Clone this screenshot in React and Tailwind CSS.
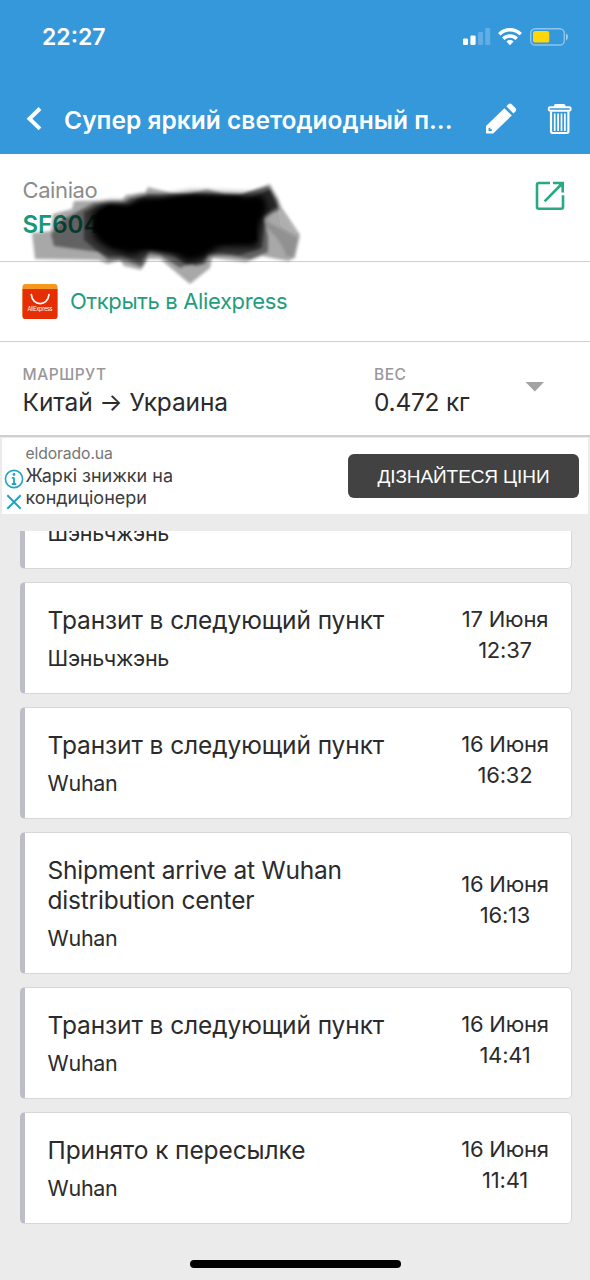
import React from "react";

const events = [
    {
        title: "Транзит в следующий пункт",
        place: "Шэньчжэнь",
        date: "17 Июня",
        time: "12:37",
    },
    {
        title: "Транзит в следующий пункт",
        place: "Wuhan",
        date: "16 Июня",
        time: "16:32",
    },
    {
        title: "Shipment arrive at Wuhan distribution center",
        latin: true,
        place: "Wuhan",
        date: "16 Июня",
        time: "16:13",
    },
    {
        title: "Транзит в следующий пункт",
        place: "Wuhan",
        date: "16 Июня",
        time: "14:41",
    },
    {
        title: "Принято к пересылке",
        place: "Wuhan",
        date: "16 Июня",
        time: "11:41",
    },
];

function StatusIcons() {
    return (
        <svg width="108" height="22" viewBox="461 26 108 22" fill="none">
            <rect x="463" y="38.5" width="5" height="6.5" rx="1.3" fill="#fff" />
            <rect x="470.4" y="35.5" width="5.2" height="9.5" rx="1.3" fill="#fff" />
            <rect x="478" y="32" width="5" height="13" rx="1.3" fill="#fff" opacity="0.22" />
            <rect x="485.2" y="28" width="5" height="17" rx="1.3" fill="#fff" opacity="0.22" />
            <g stroke="#fff" strokeWidth="3.5">
                <path d="M499.3 34.2a15.2 15.2 0 0 1 21.4 0" />
                <path d="M503.3 38.7a9.6 9.6 0 0 1 13.4 0" />
            </g>
            <path d="M510 45.2l-3.6-3.6a5.1 5.1 0 0 1 7.2 0z" fill="#fff" />
            <rect x="530.7" y="28.7" width="33.6" height="16.3" rx="4.6" stroke="#fff" strokeOpacity="0.45" strokeWidth="1.4" />
            <rect x="533" y="31" width="16.3" height="11.6" rx="2.2" fill="#ffd60a" />
            <path d="M566 33.6c2.6 1 2.6 5.8 0 6.8z" fill="#fff" fillOpacity="0.5" />
        </svg>
    );
}

function PencilIcon() {
    return (
        <svg width="32" height="32" viewBox="485 103 32 32" fill="#fff">
            <path
                fillRule="evenodd"
                d="M486 126L504.400 108.200L511.800 115.400L493.200 133.500H486.800Q486 133.500 486 132.700ZM488.600 128V131H491.700L492 129.200H490.300V127.400Z"
            />
            <path d="M506.300 106.300L508.500 104.300Q510.200 102.900 511.700 104.300L515.600 108.200Q516.900 109.700 515.600 111.200L513.500 113.500Z" />
        </svg>
    );
}

function TrashIcon() {
    return (
        <svg width="26" height="32" viewBox="547 102 26 32" fill="none" stroke="#fff">
            <path d="M554.700 106.500V104.600Q554.700 103.700 555.600 103.700H563.800Q564.700 103.700 564.700 104.600V106.500" fill="#fff" strokeWidth="1.500" />
            <rect x="548.700" y="106.300" width="22" height="3.400" rx="1.400" strokeWidth="1.900" />
            <path d="M551 110.500V130.300Q551 132 552.700 132H566.700Q568.400 132 568.400 130.300V110.500" strokeWidth="2.200" />
            <path d="M554.700 112.500V130M558.100 112.500V130M561.500 112.500V130M564.900 112.500V130" strokeWidth="1.700" />
        </svg>
    );
}

function OpenIcon() {
    return (
        <svg width="32" height="32" viewBox="534 180 32 32" fill="none" stroke="#27a984" strokeWidth="2.600">
            <path d="M550 183H539Q537 183 537 185V206.700Q537 208.700 539 208.700H561Q563 208.700 563 206.700V195.300" />
            <path d="M553 183H562.700V192.500M562.700 183L544.600 201.300" />
            <path d="M556.500 182H564V189.500Z" fill="#27a984" stroke="none" />
        </svg>
    );
}

function AliexpressLogo() {
    return (
        <svg width="36" height="36" viewBox="0 0 36 36">
            <rect x="0.500" y="0" width="35" height="35" rx="3" fill="#f7971d" />
            <path d="M0.500 5H35.500V32Q35.500 35 32.500 35H3.500Q0.500 35 0.500 32Z" fill="#e62e04" />
            <path d="M9.300 10.700C10.500 22.500 25.800 22.500 27 10.700" fill="none" stroke="#fff" strokeWidth="1.700" strokeLinecap="round" />
            <text x="18" y="27.200" fill="#fff" fontSize="5.600" textAnchor="middle" textLength="25" fontFamily="Inter, sans-serif">
                AliExpress
            </text>
        </svg>
    );
}

// Marker strokes that hide most of the tracking number
function Scribble() {
    return (
        <svg
            className="absolute left-0 top-[25px] pointer-events-none"
            width="320"
            height="112"
            viewBox="0 179 320 112"
        >
            <defs>
                <filter id="soft" x="-10%" y="-10%" width="120%" height="120%">
                    <feGaussianBlur stdDeviation="1.4" />
                </filter>
                <filter id="softer" x="-10%" y="-20%" width="120%" height="140%">
                    <feGaussianBlur stdDeviation="3.5" />
                </filter>
            </defs>
            <g filter="url(#soft)">
                <path d="M32 233L51 231L53 214L72 209L74 201L122 200L126 195L145 193L148 187L172 193L190 194L207 189L224 194L242 194L270 184L278 198L282 208L300 235L295 258L288 261L262 256L246 262L212 258L210 268L190 284L160 259L148 259L141 270L124 266L120 260L108 264L98 260L35 259Z" opacity="0.34" />
                <path d="M51 234L62 220L84 208L94 203L124 203L130 198L148 198L190 194L240 195L268 186L277 200L279 210L263 218L268 236L268 252L250 259L230 256L208 255L205 264L196 266L190 263L180 268L160 255L149 254L142 267L126 261L108 260L98 252L54 246Z" opacity="0.42" />
                <path d="M84 212L100 205H130L148 194L205 194L240 196L262 200L264 230L262 248L240 255L208 252L202 262L188 265L174 256L150 250L140 262L122 256L108 257L96 250L84 240Z" opacity="0.45" />
                <path d="M278 208L298 234L282 226Z" fill="#fff" opacity="0.08" />
                <path d="M268 222L298 238L293 257L286 256Q282 240 262 224Z" opacity="0.14" />
                <path d="M248 199L270 189L278 207L262 216L249 216Z" opacity="0.6" />
            </g>
            <path
                d="M92 212L108 203L128 204L140 197L160 198L192 193L240 195L262 195L268 206L260 226L257 247L220 247L204 258L188 262L174 254L150 249L132 256L108 249L94 238Z"
                filter="url(#softer)"
            />
            <path
                d="M98 212L108 206L130 208L142 203L180 198L240 198L254 212L257 241L215 244L190 254L176 251L112 246L94 230Z"
                filter="url(#soft)"
            />
        </svg>
    );
}

function EventCard({ event }) {
    return (
        <div className="flex items-center rounded-[5px] border border-l-[5px] border-[#d6d6d8] border-l-[#bdbdc7] bg-white pt-[22px] pb-[22px] pl-[22.600px]">
            <div className="flex-1">
                <div
                    className={`w-[345px] text-[24.500px] leading-[30px] ${
                        event.latin ? "tracking-[-0.230px]" : "tracking-[-0.100px]"
                    }`}
                >
                    {event.title}
                </div>
                <div className="mt-[10px] text-[21.500px] leading-[26px] tracking-[-0.300px]">
                    {event.place}
                </div>
            </div>
            <div className="-mt-[6px] w-[132px] text-center text-[22px] leading-[31px] tracking-[-0.200px]">
                <div>{event.date}</div>
                <div>{event.time}</div>
            </div>
        </div>
    );
}

export default function App() {
    return (
        <div className="flex h-[1280px] w-[590px] flex-col overflow-hidden bg-[#ebebeb] font-['Inter',sans-serif] text-[#2b2b2d]">
            <header className="h-[154px] bg-[#3498db] text-white">
                <div className="flex h-[74px] items-center justify-between pr-[21px] pl-[42px]">
                    <span className="text-[23px] font-semibold">22:27</span>
                    <StatusIcons />
                </div>
                <div className="flex h-[80px] items-center pt-[10px]">
                    <svg className="ml-[25px]" width="18" height="26" viewBox="25 105 18 26" fill="none">
                        <path d="M40 107.500L29.500 117.700L40 127.900" stroke="#fff" strokeWidth="4" />
                    </svg>
                    <h1 className="mt-[2px] ml-[21px] w-[421px] text-[24.500px] font-semibold tracking-[0.030px] whitespace-nowrap">
                        Супер яркий светодиодный п...
                    </h1>
                    <PencilIcon />
                    <div className="-mt-[1px] ml-[30px]">
                        <TrashIcon />
                    </div>
                </div>
            </header>

            <section className="relative flex h-[108px] justify-between border-b border-[#cfcfcf] bg-white pr-[24px] pl-[22.500px]">
                <div className="pt-[22px]">
                    <div className="text-[22px] leading-[28px] tracking-[-0.400px] text-[#8c8c8c]">
                        Cainiao
                    </div>
                    <div className="mt-[6px] text-[24px] leading-[30px] font-semibold text-[#16997a]">
                        SF604
                    </div>
                </div>
                <div className="pt-[26px]">
                    <OpenIcon />
                </div>
                <Scribble />
            </section>

            <section className="flex h-[80px] items-center border-b border-[#cfcfcf] bg-white pl-[22px]">
                <AliexpressLogo />
                <span className="ml-[12px] text-[22px] tracking-[-0.350px] text-[#1f9d7d]">
                    Открыть в Aliexpress
                </span>
            </section>

            <section className="flex h-[95px] border-b-2 border-[#cfcfcf] bg-white pt-[23px] pl-[22.600px]">
                <div className="w-[351.400px]">
                    <div className="text-[15.500px] leading-[20px] font-medium tracking-[0.500px] text-[#98989a]">
                        МАРШРУТ
                    </div>
                    <div className="mt-[2px] text-[24.500px] leading-[30px] tracking-[-0.120px]">
                        Китай → Украина
                    </div>
                </div>
                <div className="w-[151px]">
                    <div className="text-[15.500px] leading-[20px] font-medium tracking-[0.500px] text-[#98989a]">
                        ВЕС
                    </div>
                    <div className="mt-[2px] text-[24.500px] leading-[30px] tracking-[-0.250px]">
                        0.472 кг
                    </div>
                </div>
                <svg className="mt-[17px]" width="20" height="10" viewBox="0 0 20 10">
                    <path d="M0.500 0H19L9.800 9.500Z" fill="#a3a3a3" />
                </svg>
            </section>

            <section className="mx-[2px] mt-[1px] flex h-[76px] items-center bg-white">
                <div className="mt-[26px] flex w-[23px] flex-col items-center gap-[5px]">
                    <svg width="20" height="20" viewBox="0 0 20 20" fill="none">
                        <circle cx="10" cy="10" r="8.600" stroke="#22a5c2" strokeWidth="1.600" />
                        <path d="M10 8.500V15M7.800 8.800H10M7.800 15H12.200" stroke="#22a5c2" strokeWidth="1.800" />
                        <circle cx="10" cy="5.500" r="1.400" fill="#22a5c2" />
                    </svg>
                    <svg width="16" height="16" viewBox="0 0 16 16" fill="none">
                        <path d="M1.300 1.300L14.700 14.700M14.700 1.300L1.300 14.700" stroke="#22a5c2" strokeWidth="2" />
                    </svg>
                </div>
                <div className="w-[323px] pl-[0.500px]">
                    <div className="text-[15.700px] leading-[22px] tracking-[-0.100px] text-[#757575]">
                        eldorado.ua
                    </div>
                    <div className="w-[200px] text-[18px] leading-[22px] text-[#3c3c3c]">
                        Жаркі знижки на кондиціонери
                    </div>
                </div>
                <div className="flex h-[44px] w-[231px] items-center justify-center rounded-[6px] bg-[#424242] pt-[2px] font-['Liberation_Sans',sans-serif] text-[19px] tracking-[-0.100px] text-white">
                    ДІЗНАЙТЕСЯ ЦІНИ
                </div>
            </section>

            <div className="mt-[17px] h-[693px] pr-[18px] pl-[20px]">
                <div className="flex h-[38px] flex-col justify-end overflow-hidden rounded-b-[5px] border border-t-0 border-l-[5px] border-[#d6d6d8] border-l-[#bdbdc7] bg-white pb-[22px] pl-[22.600px]">
                    <div className="text-[21.500px] leading-[26px] tracking-[-0.300px]">
                        Шэньчжэнь
                    </div>
                </div>
                <div className="mt-[13px] flex flex-col gap-[13px]">
                    {events.map((event, index) => (
                        <EventCard key={index} event={event} />
                    ))}
                </div>
            </div>

            <div className="mx-auto mt-[36px] h-[8px] w-[211px] shrink-0 rounded-full bg-black" />
        </div>
    );
}
